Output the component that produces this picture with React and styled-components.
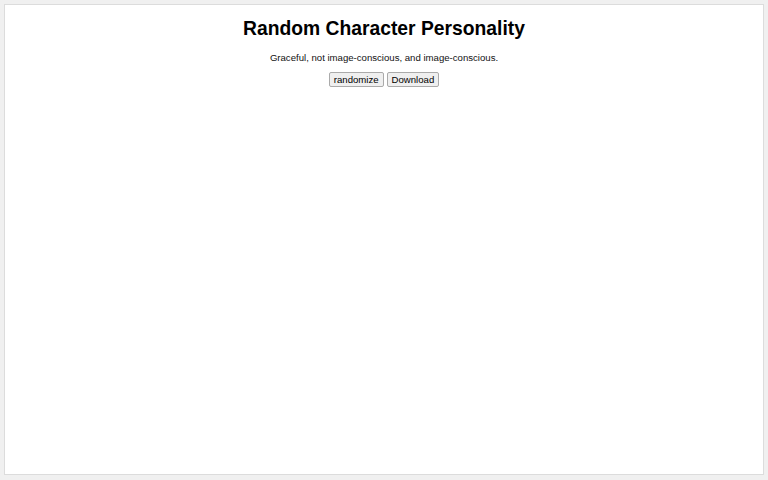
import React from 'react';
import styled, { createGlobalStyle } from 'styled-components';

const Global = createGlobalStyle`
  html, body {
    margin: 0;
    padding: 0;
    background: #f0f0f0;
    font-family: 'Liberation Sans', Arial, sans-serif;
  }
`;

const Page = styled.div`
  padding: 4px 4px 5px 4px;
  height: 480px;
  box-sizing: border-box;
`;

const Card = styled.div`
  background: #fff;
  border: 1px solid #dcdcdc;
  height: 100%;
  box-sizing: border-box;
  display: flex;
  flex-direction: column;
  align-items: center;
  padding-top: 14px;
`;

const Title = styled.h1`
  margin: 0;
  font-size: 19.3px;
  font-weight: bold;
  color: #000;
  line-height: 19px;
`;

const Line = styled.p`
  margin: 14px 0 0;
  font-size: 9.6px;
  line-height: 11px;
  color: #111;
`;

const Buttons = styled.div`
  display: flex;
  gap: 3px;
  margin-top: 9px;
`;

const Button = styled.button`
  font-family: 'Liberation Sans', Arial, sans-serif;
  font-size: 9.6px;
  line-height: 11px;
  padding: 1px 4px;
  background: #efefef;
  border: 1px solid #aaa;
  border-radius: 2px;
  color: #000;
`;

export default function App() {
  return (
    <>
      <Global />
      <Page>
        <Card>
          <Title>Random Character Personality</Title>
          <Line>Graceful, not image-conscious, and image-conscious.</Line>
          <Buttons>
            <Button>randomize</Button>
            <Button>Download</Button>
          </Buttons>
        </Card>
      </Page>
    </>
  );
}
